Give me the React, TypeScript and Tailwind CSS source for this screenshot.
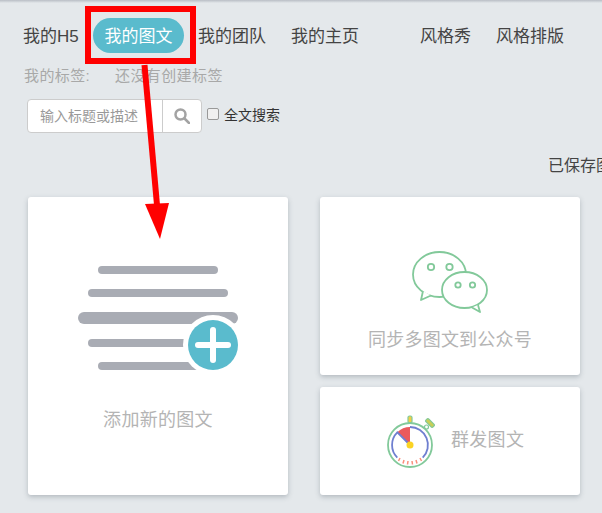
const cjk = "font-['Liberation_Sans','Noto_Sans_CJK_SC',sans-serif]"

function DocsIcon() {
  return (
    <svg width="160" height="106" viewBox="0 0 160 106" className="block">
      <rect x="20" y="0" width="120" height="8" rx="4" fill="#a9acb4" />
      <rect x="10" y="23" width="140" height="8" rx="4" fill="#a9acb4" />
      <rect x="0" y="46" width="160" height="12" rx="6" fill="#a9acb4" />
      <rect x="10" y="73" width="140" height="8" rx="4" fill="#a9acb4" />
      <rect x="20" y="96" width="120" height="8" rx="4" fill="#a9acb4" />
      <circle cx="135" cy="79" r="30" fill="#fff" />
      <circle cx="135" cy="79" r="25" fill="#5abbcd" />
      <rect x="117" y="76" width="36" height="6" rx="3" fill="#fff" />
      <rect x="132" y="61" width="6" height="36" rx="3" fill="#fff" />
    </svg>
  )
}

function WechatIcon() {
  return (
    <svg width="78" height="64" viewBox="0 0 78 64" fill="none" stroke="#82c99a" strokeWidth="1.800" className="block">
      <ellipse cx="28.500" cy="24.500" rx="26.500" ry="22.500" fill="#fff" />
      <path d="M12 41 L10 50 L20 45.500" fill="#fff" strokeLinejoin="round" />
      <circle cx="20" cy="17" r="3.200" />
      <circle cx="38.500" cy="17" r="3.200" />
      <ellipse cx="53.500" cy="40" rx="22.500" ry="18" fill="#fff" />
      <path d="M61 57.500 L69 62 L67 55" fill="#fff" strokeLinejoin="round" />
      <circle cx="47" cy="35" r="2.700" />
      <circle cx="61.500" cy="35" r="2.700" />
    </svg>
  )
}

function TimerIcon() {
  return (
    <svg width="50" height="55" viewBox="0 0 50 55" fill="none" className="block">
      <rect x="23" y="2" width="4" height="7" rx="1.500" fill="#f2cf45" stroke="#82c99a" strokeWidth="1.200" />
      <rect x="43" y="4" width="4" height="10" rx="1.500" transform="rotate(-45 45 9)" fill="#c9cf56" stroke="#82c99a" strokeWidth="1.200" />
      <circle cx="41.500" cy="13" r="2" fill="#fff" stroke="#82c99a" strokeWidth="1.200" />
      <circle cx="25" cy="31" r="22" fill="#fff" stroke="#82c99a" strokeWidth="1.800" />
      <path d="M25 31 L25 13 A18 18 0 0 0 12.300 18.300z" fill="#ea5a5d" />
      <path d="M25 31 L12.300 18.300 A18 18 0 0 0 12.300 43.700" stroke="#6f7fd0" strokeWidth="1.800" />
      <path d="M25 13 A18 18 0 0 1 37.700 43.700" stroke="#6f7fd0" strokeWidth="1.800" />
      <path d="M15 44l-1.500 3 M19 46l-1 3.500 M23 47l-.5 3.500 M27 47l.5 3.500 M31 46l1 3.500 M35 44l1.500 3" stroke="#fa8f7c" strokeWidth="1.500" />
      <circle cx="25" cy="31" r="3.500" fill="#fbd324" />
    </svg>
  )
}

export default function App() {
  return (
    <div className={`${cjk} relative w-[602px] h-[513px] overflow-hidden bg-[#e4e8eb] text-[#444]`}>
      <div className="h-[3px] bg-gradient-to-b from-[#b9bec5] to-[#e4e8eb]" />

      <nav className="flex items-start h-[35px] mt-[15px] ml-[24px] text-[17px] leading-[37px]">
        <a className="w-[69px] -ml-[1px] mr-[1px]">我的H5</a>
        <a className="w-[91px] h-[35px] text-center rounded-full bg-[#5abbcd] text-white">我的图文</a>
        <a className="ml-[14px] w-[93px]">我的团队</a>
        <a className="w-[129px]">我的主页</a>
        <a className="w-[76px]">风格秀</a>
        <a>风格排版</a>
      </nav>

      <div className="flex mt-[14px] ml-[24px] text-[15px] leading-[17px] text-[#a8a8a8] tracking-[0.4px]">
        <span className="w-[91px]">我的标签:</span>
        <span>还没有创建标签</span>
      </div>

      <div className="flex mt-[15px] ml-[27px]">
        <div className="flex h-[34px] w-[175px] bg-white border border-[#ccc] rounded-[4px]">
          <div className="w-[135px] pl-[12px] leading-[32px] text-[14px] text-[#999] border-r border-[#ccc]">输入标题或描述</div>
          <div className="flex flex-1 items-center justify-center">
            <svg width="16" height="16" viewBox="0 0 16 16" fill="none" stroke="#a3a3a3" strokeWidth="2.500">
              <circle cx="6.500" cy="6.500" r="5" />
              <path d="M10.500 10.500 15 15" strokeLinecap="round" />
            </svg>
          </div>
        </div>
        <label className="flex ml-[5px] text-[14px] leading-[16px] text-[#333] pt-[8px]">
          <span className="w-[12px] h-[12px] mr-[5px] mt-[1px] bg-[#f0f0f0] border border-[#999] rounded-[2px]" />
          全文搜索
        </label>
      </div>

      <div className="mt-[23px] ml-[548px] w-[80px] h-[20px] text-[16px] leading-[20px] whitespace-nowrap">已保存图文</div>

      <div className="flex gap-[32px] mt-[21px] ml-[28px] text-[#b4b4b4]">
        <div className="flex flex-col items-center w-[260px] h-[298px] bg-white rounded-[3px] shadow-[0_2px_5px_rgba(120,130,140,0.45)]">
          <div className="mt-[69px]">
            <DocsIcon />
          </div>
          <div className="mt-[36px] text-[18px] leading-[24px] tracking-[0.3px]">添加新的图文</div>
        </div>

        <div className="flex flex-col gap-[12px] w-[260px]">
          <div className="flex flex-col items-center h-[178px] bg-white rounded-[3px] shadow-[0_2px_5px_rgba(120,130,140,0.45)]">
            <div className="mt-[53px]">
              <WechatIcon />
            </div>
            <div className="mt-[14px] text-[18px] leading-[24px] tracking-[0.2px]">同步多图文到公众号</div>
          </div>
          <div className="flex items-center h-[108px] pl-[65px] bg-white rounded-[3px] shadow-[0_2px_5px_rgba(120,130,140,0.45)]">
            <TimerIcon />
            <span className="ml-[16px] -mt-[2px] text-[18px] tracking-[0.3px]">群发图文</span>
          </div>
        </div>
      </div>

      {/* red annotation drawn over the page */}
      <div className="absolute left-[85px] top-[6px] w-[111px] h-[58px] border-[6px] border-[#ff0000]" />
      <svg className="absolute left-0 top-0" width="602" height="513" viewBox="0 0 602 513">
        <path d="M144.500 65 L157 205" stroke="#ff0000" strokeWidth="6" />
        <path d="M145 204 L169 203 L160 239z" fill="#ff0000" />
      </svg>
    </div>
  )
}
